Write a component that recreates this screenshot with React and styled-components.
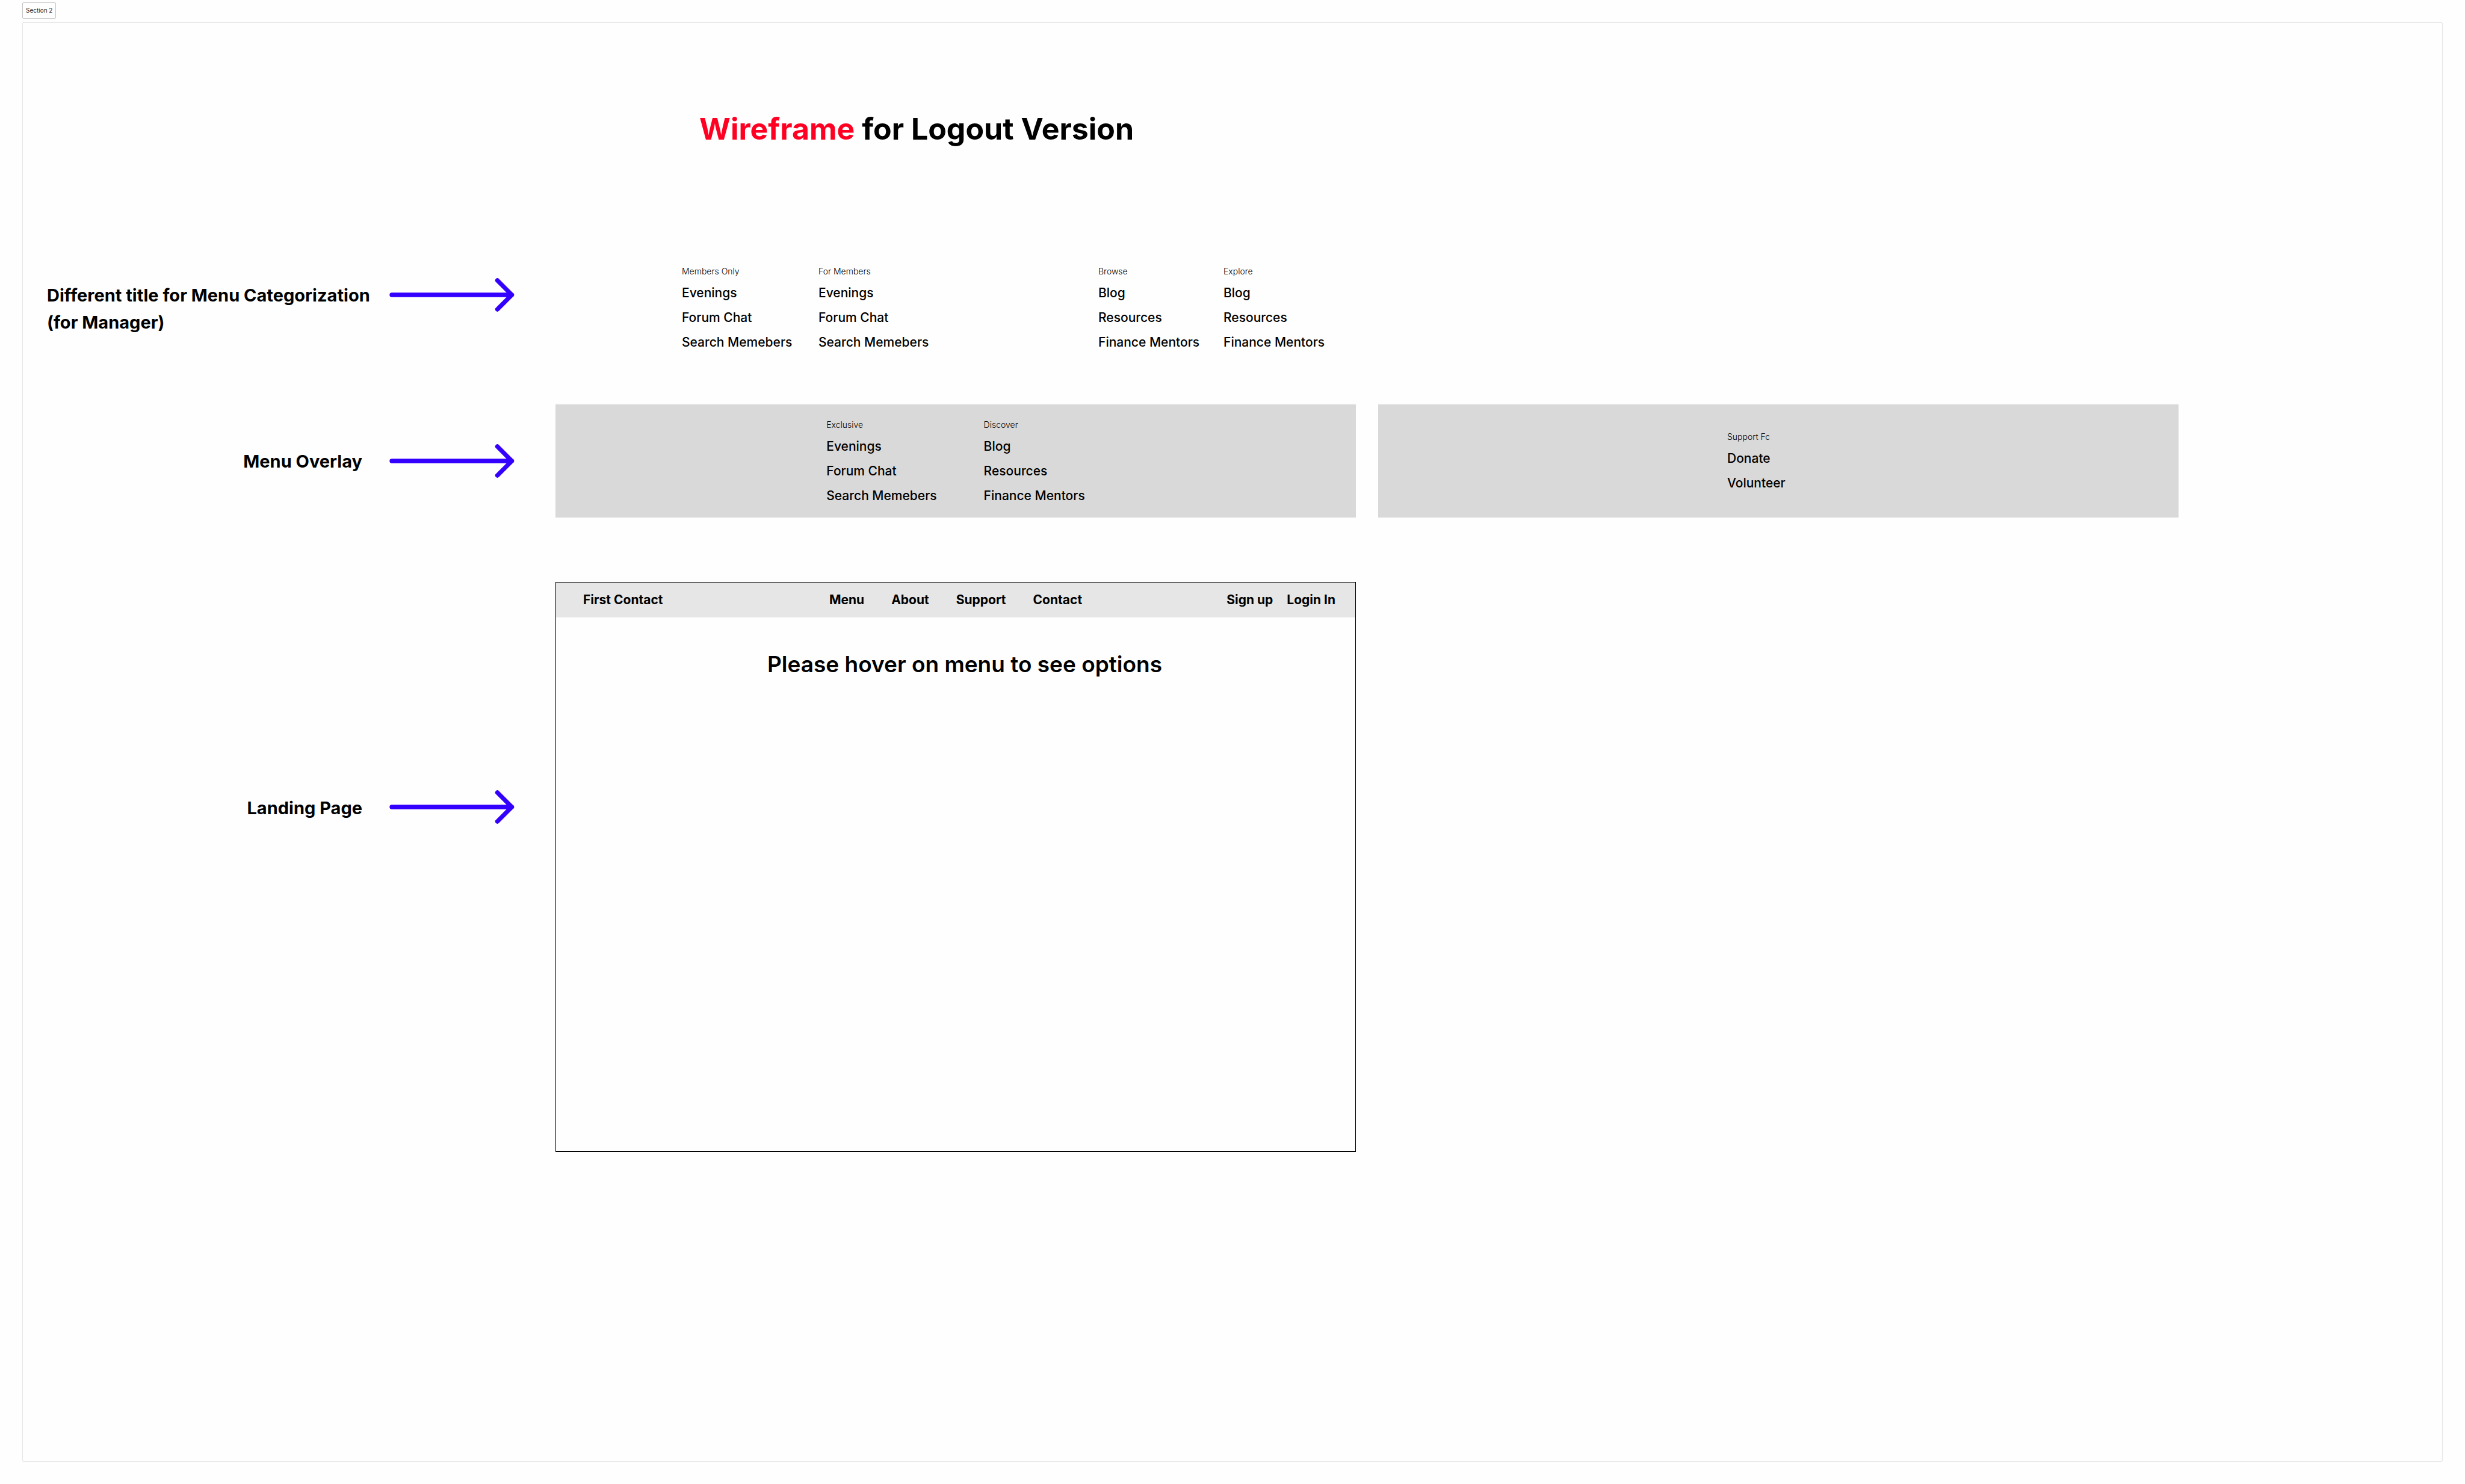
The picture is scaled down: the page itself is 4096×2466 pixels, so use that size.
import React from "react";
import styled, { createGlobalStyle } from "styled-components";

const GlobalStyle = createGlobalStyle`
  * { box-sizing: border-box; margin: 0; padding: 0; }
  body { background: #fefefe; color: #000; font-family: Inter, "Liberation Sans", sans-serif; }
`;

const Page = styled.div`
  min-height: 100vh;
  display: flex;
  flex-direction: column;
  gap: 6px;
  padding: 4px 37px 37px;
`;

const SectionTag = styled.div`
  align-self: flex-start;
  padding: 0 5px;
  border: 1px solid #c4c4c4;
  border-radius: 2px;
  color: #1e1e1e;
  font-size: 10px;
  line-height: 25px;
`;

const Board = styled.main`
  flex: 1;
  border: 1px solid #e6e6e6;
  border-radius: 2px;
  padding: 144px 40px;
`;

const Title = styled.h1`
  margin-left: 1084px;
  font-size: 50px;
  font-weight: 700;
  line-height: 64px;
`;

const Accent = styled.span`
  color: #ff0022;
`;

const Annotated = styled.section`
  display: grid;
  grid-template-columns: 569px 208px 1fr;
  margin-top: ${(p) => p.$gap}px;
`;

const Note = styled.h2`
  justify-self: ${(p) => (p.$multiline ? "start" : "end")};
  margin-top: ${(p) => p.$top}px;
  padding-right: ${(p) => (p.$multiline ? 0 : 45)}px;
  font-size: 29px;
  font-weight: 700;
  line-height: 45px;
  white-space: nowrap;
`;

const ArrowIcon = styled.svg`
  width: 208px;
  height: 56px;
  margin-top: ${(p) => p.$top}px;
`;

const Variants = styled.div`
  display: grid;
  grid-template-columns: 227px 465px 208px auto;
  justify-content: start;
  padding-left: 278px;
`;

const Column = styled.div`
  min-width: ${(p) => (p.$wide ? "170px" : "auto")};
`;

const ColumnTitle = styled.h3`
  margin-bottom: 6px;
  font-size: 14px;
  font-weight: 300;
  line-height: 18px;
`;

const ColumnList = styled.ul`
  list-style: none;
`;

const ColumnLink = styled.a`
  display: block;
  color: inherit;
  text-decoration: none;
  font-size: 21px;
  font-weight: 500;
  line-height: 41px;
  white-space: nowrap;
`;

const Frames = styled.div`
  display: grid;
  grid-template-columns: 1fr 1fr;
  gap: 37px;
  padding: 0 398px 0 68px;
`;

const Panel = styled.div`
  display: flex;
  justify-content: center;
  align-items: center;
  gap: 78px;
  height: 188px;
  padding-top: 8px;
  background: #d9d9d9;
`;

const Landing = styled.div`
  min-height: 947px;
  border: 1px solid #000;
`;

const NavBar = styled.nav`
  display: grid;
  grid-template-columns: 1fr auto 1fr;
  align-items: center;
  height: 58px;
  padding: 0 33px;
  background: #e6e6e6;
  font-size: 21px;
  font-weight: 700;
  line-height: 30px;
`;

const NavGroup = styled.div`
  display: flex;
  justify-content: ${(p) => p.$align || "center"};
  gap: ${(p) => p.$gap || 0}px;
`;

const Brand = styled.a`
  padding-left: 12px;
  color: inherit;
  text-decoration: none;
`;

const NavLink = styled.a`
  color: inherit;
  text-decoration: none;
`;

const Hint = styled.p`
  padding-top: 55px;
  padding-left: 30px;
  text-align: center;
  font-size: 37px;
  font-weight: 600;
  line-height: 46px;
`;

const members = ["Evenings", "Forum Chat", "Search Memebers"];
const discover = ["Blog", "Resources", "Finance Mentors"];
const pages = ["Menu", "About", "Support", "Contact"];

function Arrow({ top }) {
  return (
    <ArrowIcon
      $top={top}
      viewBox="0 0 208 56"
      fill="none"
      stroke="#3300ff"
      strokeWidth="7.4"
      strokeLinecap="round"
      strokeLinejoin="round"
      aria-hidden="true"
    >
      <path d="M4 28H203.500M179.500 4L203.500 28L179.500 52" />
    </ArrowIcon>
  );
}

function MenuColumn({ title, items, wide }) {
  return (
    <Column $wide={wide}>
      <ColumnTitle>{title}</ColumnTitle>
      <ColumnList>
        {items.map((item) => (
          <li key={item}>
            <ColumnLink href="#">{item}</ColumnLink>
          </li>
        ))}
      </ColumnList>
    </Column>
  );
}

export default function App() {
  return (
    <>
      <GlobalStyle />
      <Page>
        <SectionTag>Section 2</SectionTag>
        <Board>
          <Title>
            <Accent>Wireframe</Accent> for Logout Version
          </Title>

          <Annotated $gap={196}>
            <Note $multiline $top={26}>
              Different title for Menu Categorization
              <br />
              (for Manager)
            </Note>
            <Arrow top={20} />
            <Variants>
              <MenuColumn title="Members Only" items={members} />
              <MenuColumn title="For Members" items={members} />
              <MenuColumn title="Browse" items={discover} />
              <MenuColumn title="Explore" items={discover} />
            </Variants>
          </Annotated>

          <Annotated $gap={83}>
            <Note $top={72}>Menu Overlay</Note>
            <Arrow top={66} />
            <Frames>
              <Panel>
                <MenuColumn title="Exclusive" items={members} />
                <MenuColumn title="Discover" items={discover} />
              </Panel>
              <Panel>
                <MenuColumn wide title="Support Fc" items={["Donate", "Volunteer"]} />
              </Panel>
            </Frames>
          </Annotated>

          <Annotated $gap={107}>
            <Note $top={353}>Landing Page</Note>
            <Arrow top={346} />
            <Frames>
              <Landing>
                <NavBar>
                  <NavGroup $align="flex-start">
                    <Brand href="#">First Contact</Brand>
                  </NavGroup>
                  <NavGroup $gap={45}>
                    {pages.map((page) => (
                      <NavLink href="#" key={page}>
                        {page}
                      </NavLink>
                    ))}
                  </NavGroup>
                  <NavGroup $align="flex-end" $gap={23}>
                    <NavLink href="#">Sign up</NavLink>
                    <NavLink href="#">Login In</NavLink>
                  </NavGroup>
                </NavBar>
                <Hint>Please hover on menu to see options</Hint>
              </Landing>
            </Frames>
          </Annotated>
        </Board>
      </Page>
    </>
  );
}
